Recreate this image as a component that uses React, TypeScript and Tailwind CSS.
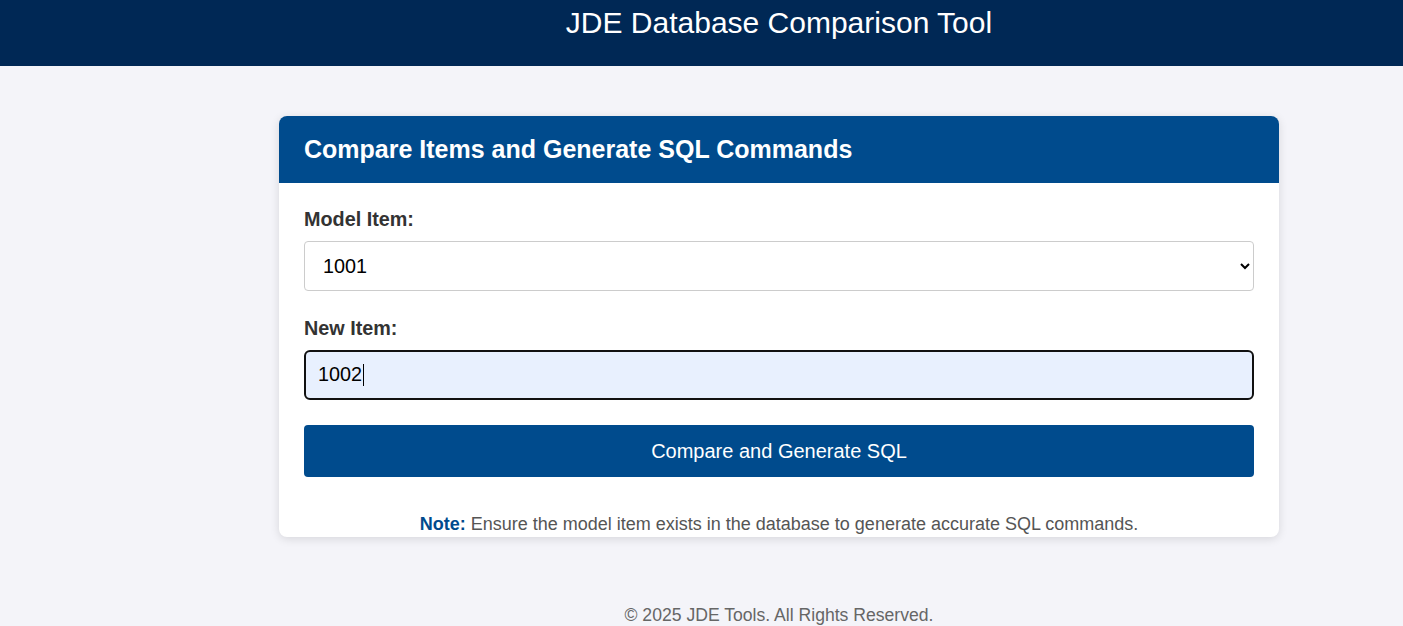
import { FC } from 'react';

const App: FC = () => {
  return (
    <div className="min-h-screen bg-[#f4f4f9] font-['Liberation_Sans',Arial,sans-serif]">
      <header className="h-[66px] bg-[#002855] pl-[155px] text-center">
        <h1 className="pt-[6px] text-[30px] leading-[34px] text-white">JDE Database Comparison Tool</h1>
      </header>

      <main className="pl-[155px] pt-[50px]">
        <div className="mx-auto w-[1000px] overflow-hidden rounded-[8px] bg-white shadow-[0_2px_10px_rgba(0,0,0,0.12)]">
          <div className="bg-[#004b8d] px-[25px] py-[19px]">
            <h2 className="text-[25px] font-bold leading-[29px] text-white">Compare Items and Generate SQL Commands</h2>
          </div>

          <div className="px-[25px] pt-[25px] pb-[3px]">
            <label htmlFor="model-item" className="block text-[19.8px] font-bold leading-[23px] text-[#333]">
              Model Item:
            </label>
            <select
              id="model-item"
              className="mt-[10px] block h-[50px] w-full rounded-[4px] border border-[#ccc] bg-white px-[14px] text-[19.8px] text-black"
              defaultValue="1001"
            >
              <option value="1001">1001</option>
              <option value="1002">1002</option>
              <option value="1003">1003</option>
            </select>

            <label htmlFor="new-item" className="mt-[26px] block text-[19.8px] font-bold leading-[23px] text-[#333]">
              New Item:
            </label>
            <div
              id="new-item"
              className="mt-[10px] flex h-[50px] w-full items-center rounded-[6px] border-2 border-[#111] bg-[#e8f0fe] px-[12px] text-[19.8px] text-black"
            >
              1002<span className="ml-[1px] inline-block h-[22px] w-[1px] bg-black" />
            </div>

            <button className="mt-[25px] block h-[52px] w-full rounded-[4px] bg-[#004b8d] text-[20px] text-white">
              Compare and Generate SQL
            </button>

            <p className="mt-[37px] text-center text-[18px] leading-[20px] text-[#555]">
              <strong className="text-[#004b8d]">Note:</strong> Ensure the model item exists in the database to generate accurate SQL commands.
            </p>
          </div>
        </div>
      </main>

      <footer className="pl-[155px] pt-[68px] text-center text-[17.6px] leading-[20px] text-[#666]">
        © 2025 JDE Tools. All Rights Reserved.
      </footer>
    </div>
  );
};

export default App;
